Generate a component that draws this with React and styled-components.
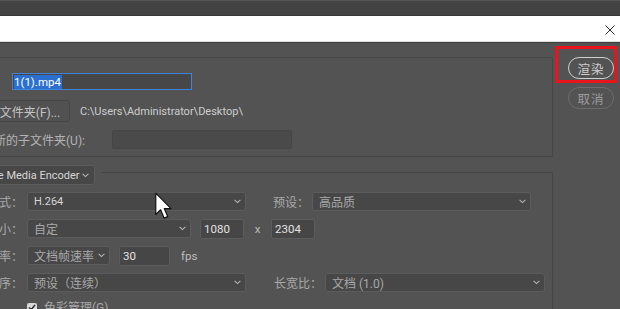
import styled, { createGlobalStyle } from "styled-components";

const GlobalStyle = createGlobalStyle`
  html, body {
    margin: 0;
    padding: 0;
    background: #535353;
  }

  body {
    font-family: Roboto, "Noto Sans CJK SC", sans-serif;
    font-size: 11px;
    color: #d2d2d2;
  }
`;

const Chevron = () => (
  <svg width="7" height="5" viewBox="0 0 7 5">
    <polyline points="0.6,0.8 3.5,3.6 6.4,0.8" fill="none" stroke="#b4b4b4" strokeWidth="1.1" />
  </svg>
);

function App() {
  return (
    <Screen>
      <GlobalStyle />
      <WindowStrip />

      <TitleBar>
        <CloseButton>
          <svg width="10" height="10" viewBox="0 0 10 10">
            <path d="M0.5 0.5 L9.5 9.5 M9.5 0.5 L0.5 9.5" stroke="#2b2b2b" strokeWidth="1" />
          </svg>
        </CloseButton>
      </TitleBar>

      <Body>
        <MainColumn>
          <GroupBox $mt={14} $pt={15} $pb={7}>
            <Row $h={17}>
              <Label $w={76}>名称(N)：</Label>
              <FileInput $ml={19}>
                <Selected>1(1).mp4</Selected>
              </FileInput>
            </Row>

            <Row $h={22} $mt={10} $pl={49}>
              <PlainButton>选择文件夹(F)...</PlainButton>
              <PathText>C:\Users\Administrator\Desktop\</PathText>
            </Row>

            <Row $h={19} $mt={8} $pl={36}>
              <SmallBox />
              <Label $w={118} $left>创建新的子文件夹(U):</Label>
              <NumberInput $w={180} $ml={24} $disabled />
            </Row>
          </GroupBox>

          <GroupBox $mt={15} $pt={0} $pb={0} $open>
            <Legend>
              <Dropdown $w={130} $h={20} $pr={5}>
                <Latin>Adobe Media Encoder</Latin>
                <Chevron />
              </Dropdown>
            </Legend>

            <Fields>
              <Row $h={19}>
                <FieldLabel>格式：</FieldLabel>
                <Dropdown $w={219}>
                  <Latin>H.264</Latin>
                  <Chevron />
                </Dropdown>
                <FieldLabel $w={63} $mr={3}>预设：</FieldLabel>
                <Dropdown $w={219}>
                  <Cjk>高品质</Cjk>
                  <Chevron />
                </Dropdown>
              </Row>

              <Row $h={19} $mt={8}>
                <FieldLabel>大小：</FieldLabel>
                <Dropdown $w={164}>
                  <Cjk>自定</Cjk>
                  <Chevron />
                </Dropdown>
                <NumberInput $w={44} $ml={9}>1080</NumberInput>
                <Times>x</Times>
                <NumberInput $w={44}>2304</NumberInput>
              </Row>

              <Row $h={19} $mt={8}>
                <FieldLabel>帧速率：</FieldLabel>
                <Dropdown $w={83}>
                  <Cjk>文档帧速率</Cjk>
                  <Chevron />
                </Dropdown>
                <NumberInput $w={51} $ml={9}>30</NumberInput>
                <Unit>fps</Unit>
              </Row>

              <Row $h={19} $mt={8}>
                <FieldLabel>帧顺序：</FieldLabel>
                <Dropdown $w={219}>
                  <Cjk>预设（连续）</Cjk>
                  <Chevron />
                </Dropdown>
                <FieldLabel $w={76} $mr={3}>长宽比：</FieldLabel>
                <Dropdown $w={220}>
                  <Cjk>文档 (1.0)</Cjk>
                  <Chevron />
                </Dropdown>
              </Row>

              <Row $h={14} $mt={7} $pl={110}>
                <CheckBox>
                  <svg width="8" height="7" viewBox="0 0 9 8">
                    <polyline points="1,4 3.5,6.5 8,1" fill="none" stroke="#2e2e2e" strokeWidth="1.8" />
                  </svg>
                </CheckBox>
                <Cjk $ml={7}>色彩管理(G)</Cjk>
              </Row>
            </Fields>
          </GroupBox>
        </MainColumn>

        <ActionColumn>
          <Highlight>
            <PillButton $primary>渲染</PillButton>
          </Highlight>
          <PillButton $mt={4} $ml={13}>取消</PillButton>
        </ActionColumn>
      </Body>

      <Cursor width="17" height="28" viewBox="0 0 13 21">
        <path
          d="M0.6 0.6 V17 L4.3 13.4 L7 19.8 L9.7 18.6 L7.1 12.5 H12.2 Z"
          fill="#ffffff"
          stroke="#111111"
          strokeWidth="0.9"
          strokeLinejoin="round"
        />
      </Cursor>
    </Screen>
  );
}

export default App;

const Screen = styled.div`
  position: relative;
  width: 620px;
  height: 309px;
  overflow: hidden;
  background: #535353;
`;

const WindowStrip = styled.div`
  height: 14px;
  background: #434343;
  border-top: 1px solid #565656;
  border-bottom: 1px solid #393939;
`;

const TitleBar = styled.div`
  height: 25px;
  background: #ffffff;
  border-bottom: 1px solid #e0e0e0;

  display: flex;
  align-items: center;
  justify-content: flex-end;
  padding-right: 5px;
`;

const CloseButton = styled.div`
  width: 10px;
  height: 10px;
  margin-top: 2px;
  display: flex;
`;

const Body = styled.div`
  display: flex;
  border-top: 1px solid #3c3c3c;
  height: 266px;
`;

const MainColumn = styled.div`
  flex: none;
  width: 653px;
  margin-left: -100px;
`;

const GroupBox = styled.div`
  display: flex;
  flex-direction: column;
  margin-top: ${(p) => p.$mt}px;
  padding: ${(p) => p.$pt}px 0 ${(p) => p.$pb}px 16px;
  border: 1px solid #464646;
  border-bottom: ${(p) => (p.$open ? "none" : "1px solid #464646")};
  height: ${(p) => (p.$open ? "200px" : "auto")};
`;

const Row = styled.div`
  display: flex;
  align-items: center;
  height: ${(p) => p.$h}px;
  margin-top: ${(p) => p.$mt || 0}px;
  padding-left: ${(p) => p.$pl || 0}px;
`;

const Label = styled.div`
  flex: none;
  width: ${(p) => p.$w}px;
  display: flex;
  justify-content: ${(p) => (p.$left ? "flex-start" : "flex-end")};
  white-space: nowrap;
  font-family: Roboto, "Noto Sans CJK SC", sans-serif;
  font-size: 12px;
  color: #b3b3b3;
`;

const FileInput = styled.div`
  box-sizing: border-box;
  width: 180px;
  height: 17px;
  margin-left: ${(p) => p.$ml}px;
  padding-left: 1px;
  display: flex;
  align-items: center;
  background: #474747;
  border: 1px solid #3f83da;
`;

const Selected = styled.span`
  background: #2b6fd0;
  color: #ffffff;
  font-size: 11.5px;
  line-height: 14px;
  padding: 0 1px 0 0;
`;

const PlainButton = styled.div`
  box-sizing: border-box;
  flex: none;
  width: 104px;
  height: 22px;
  display: flex;
  align-items: center;
  justify-content: center;
  background: #515151;
  border: 1px solid #474747;
  border-radius: 3px;
  font-family: Roboto, "Noto Sans CJK SC", sans-serif;
  font-size: 12px;
  color: #c4c4c4;
  white-space: nowrap;
`;

const PathText = styled.span`
  margin-left: 10px;
  font-size: 11px;
  color: #cdcdcd;
  white-space: nowrap;
`;

const SmallBox = styled.div`
  flex: none;
  width: 11px;
  height: 11px;
  margin-right: 6px;
  background: #d8d8d8;
  border-radius: 2px;
`;

const NumberInput = styled.div`
  box-sizing: border-box;
  flex: none;
  width: ${(p) => p.$w}px;
  height: ${(p) => (p.$disabled ? 19 : 20)}px;
  margin-left: ${(p) => p.$ml || 0}px;
  padding-left: 3px;
  display: flex;
  align-items: center;
  background: ${(p) => (p.$disabled ? "#4a4a4a" : "#464646")};
  border: 1px solid ${(p) => (p.$disabled ? "#464646" : "#5c5c5c")};
  border-radius: 2px;
  font-size: 11.5px;
  color: #e2e2e2;
`;

const Legend = styled.div`
  display: flex;
  width: fit-content;
  margin-top: -8px;
  padding: 0 6px 0 48px;
  background: #535353;
`;

const Fields = styled.div`
  margin-top: 7px;
`;

const Dropdown = styled.div`
  box-sizing: border-box;
  flex: none;
  width: ${(p) => p.$w}px;
  height: ${(p) => p.$h || 19}px;
  padding: 0 ${(p) => p.$pr || 4}px 0 6px;
  display: flex;
  align-items: center;
  justify-content: space-between;
  background: #474747;
  border: 1px solid #5c5c5c;
  border-radius: 3px;
  white-space: nowrap;
`;

const Latin = styled.span`
  font-family: Roboto, sans-serif;
  font-size: 11px;
  color: #d6d6d6;
`;

const Cjk = styled.span`
  margin-left: ${(p) => p.$ml || 0}px;
  font-family: Roboto, "Noto Sans CJK SC", sans-serif;
  font-size: 12px;
  color: #a9a9a9;
  white-space: nowrap;
`;

const FieldLabel = styled.div`
  flex: none;
  width: ${(p) => p.$w || 106}px;
  margin-right: ${(p) => p.$mr ?? 4}px;
  display: flex;
  justify-content: flex-end;
  white-space: nowrap;
  font-family: "Noto Sans CJK SC", sans-serif;
  font-size: 12px;
  color: #a9a9a9;
`;

const Times = styled.span`
  flex: none;
  width: 27px;
  text-align: center;
  font-size: 11.5px;
  color: #bcbcbc;
`;

const Unit = styled.span`
  margin-left: 11px;
  font-size: 11.5px;
  color: #bcbcbc;
`;

const CheckBox = styled.div`
  box-sizing: border-box;
  width: 10px;
  height: 10px;
  margin-top: 3px;
  display: flex;
  align-items: center;
  justify-content: center;
  background: #d9d9d9;
  border-radius: 2px;
`;

const ActionColumn = styled.div`
  flex: 1;
  display: flex;
  flex-direction: column;
  align-items: flex-start;
  padding-left: 2px;
`;

const Highlight = styled.div`
  margin-top: 3px;
  padding: 8px 0 1px 10px;
  border: 3px solid #ea141c;
`;

const PillButton = styled.div`
  box-sizing: border-box;
  width: 46px;
  height: 22px;
  margin-top: ${(p) => p.$mt || 0}px;
  margin-left: ${(p) => p.$ml || 0}px;
  display: flex;
  align-items: center;
  justify-content: center;
  border: ${(p) => (p.$primary ? "1.5px solid #cfcfcf" : "1px solid #6c6c6c")};
  border-radius: 11px;
  font-family: "Noto Sans CJK SC", sans-serif;
  font-size: 12.5px;
  letter-spacing: 1px;
  color: ${(p) => (p.$primary ? "#d0d0d0" : "#9c9c9c")};
`;

const Cursor = styled.svg`
  position: absolute;
  left: 155px;
  top: 192px;
`;
